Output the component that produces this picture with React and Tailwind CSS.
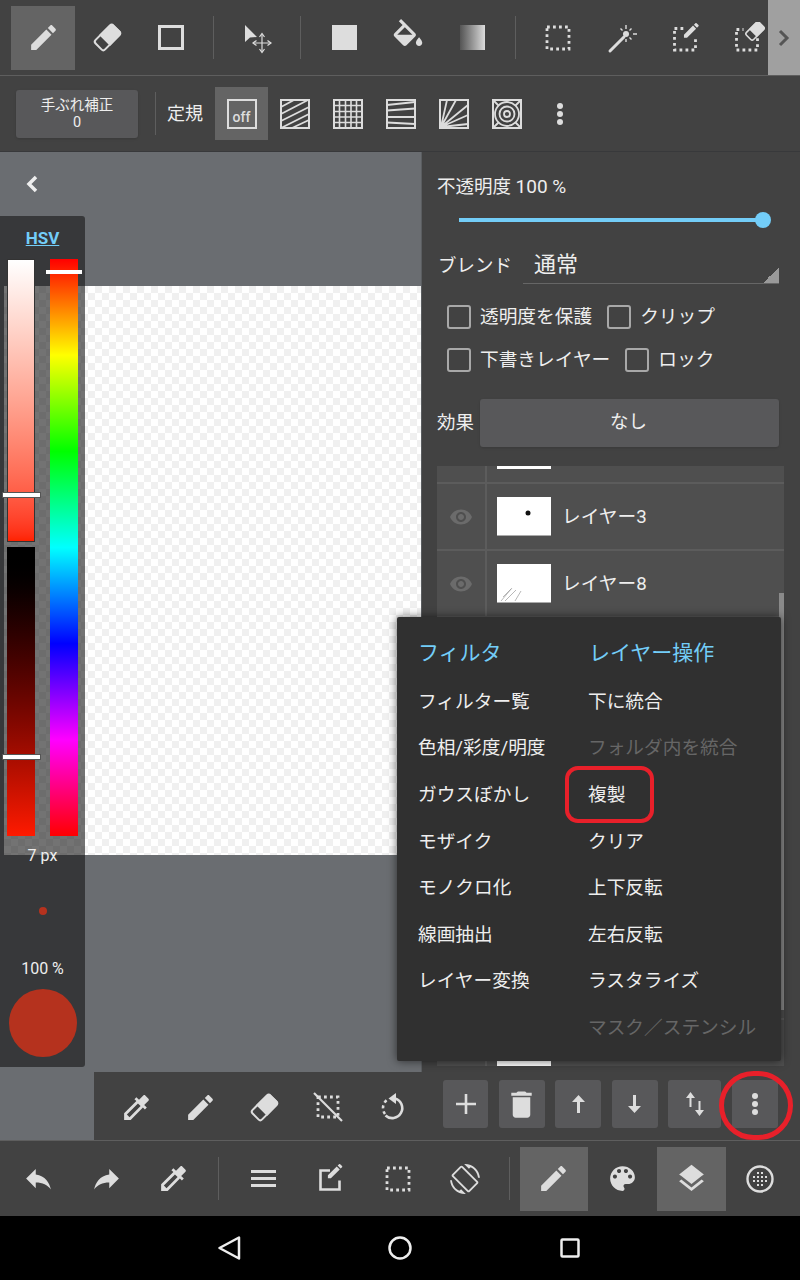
import React from 'react';

const C = '#dddddd';

const PATHS = {
  pencil: 'M3 17.25V21h3.75L17.81 9.94l-3.75-3.75L3 17.25zM20.71 7.04c.39-.39.39-1.02 0-1.41l-2.34-2.34c-.39-.39-1.02-.39-1.41 0l-1.83 1.83 3.75 3.75 1.83-1.83z',
  bucket: 'M16.56 8.94L7.62 0 6.21 1.41l2.38 2.38-5.15 5.15c-.59.59-.59 1.54 0 2.12l5.5 5.5c.29.29.68.44 1.06.44s.77-.15 1.06-.44l5.5-5.5c.59-.58.59-1.53 0-2.12zM5.21 10L10 5.21 14.79 10H5.21zM19 11.5s-2 2.17-2 3.5c0 1.1.9 2 2 2s2-.9 2-2c0-1.33-2-3.5-2-3.5z',
  dropper: 'M20.71 5.63l-2.34-2.34c-.39-.39-1.02-.39-1.41 0l-3.12 3.12-1.93-1.91-1.41 1.41 1.42 1.42L3 16.25V21h4.75l8.92-8.92 1.42 1.42 1.41-1.41-1.92-1.92 3.12-3.12c.4-.4.4-1.03.01-1.42zM6.92 19L5 17.08l8.06-8.06 1.92 1.92L6.92 19z',
  undo: 'M10 9V5l-7 7 7 7v-4.1c5 0 8.5 1.6 11 5.1-1-5-4-10-11-11z',
  redo: 'M14 9V5l7 7-7 7v-4.1c-5 0-8.5 1.6-11 5.1 1-5 4-10 11-11z',
  palette: 'M12 3c-4.97 0-9 4.03-9 9s4.03 9 9 9c.83 0 1.5-.67 1.5-1.5 0-.39-.15-.74-.39-1.01-.23-.26-.38-.61-.38-.99 0-.83.67-1.5 1.5-1.5H16c2.76 0 5-2.24 5-5 0-4.42-4.03-8-9-8zm-5.5 9c-.83 0-1.5-.67-1.5-1.5S5.67 9 6.5 9 8 9.67 8 10.5 7.33 12 6.5 12zm3-4C8.67 8 8 7.33 8 6.5S8.67 5 9.5 5s1.5.67 1.5 1.5S10.33 8 9.5 8zm5 0c-.83 0-1.5-.67-1.5-1.5S13.67 5 14.5 5s1.5.67 1.5 1.5S15.33 8 14.5 8zm3 4c-.83 0-1.5-.67-1.5-1.5S16.67 9 17.5 9s1.5.67 1.5 1.5-.67 1.5-1.5 1.5z',
  layers: 'M11.99 18.54l-7.37-5.73L3 14.07l9 7 9-7-1.63-1.27-7.38 5.74zM12 16l7.36-5.73L21 9l-9-7-9 7 1.63 1.27L12 16z',
  trash: 'M6 19c0 1.1.9 2 2 2h8c1.1 0 2-.9 2-2V7H6v12zM19 4h-3.5l-1-1h-5l-1 1H5v2h14V4z',
  eye: 'M12 4.5C7 4.5 2.73 7.61 1 12c1.73 4.39 6 7.5 11 7.5s9.27-3.11 11-7.5c-1.73-4.39-6-7.5-11-7.5zM12 17c-2.76 0-5-2.24-5-5s2.24-5 5-5 5 2.24 5 5-2.24 5-5 5zm0-8c-1.66 0-3 1.34-3 3s1.34 3 3 3 3-1.34 3-3-1.34-3-3-3z',
  screenRotate: 'M16.48 2.52c3.27 1.55 5.61 4.72 5.97 8.48h1.5C23.44 4.84 18.29 0 12 0l-.66.03 3.81 3.81 1.33-1.32zm-6.25-.77c-.59-.59-1.54-.59-2.12 0L1.75 8.11c-.59.59-.59 1.54 0 2.12l12.02 12.02c.59.59 1.54.59 2.12 0l6.36-6.36c.59-.59.59-1.54 0-2.12L10.23 1.75zm4.6 19.44L2.81 9.17l6.36-6.36 12.02 12.02-6.36 6.36zm-7.31.29C4.25 19.94 1.91 16.76 1.55 13H.05C.56 19.16 5.71 24 12 24l.66-.03-3.81-3.81-1.33 1.32z',
};

function Mi({ name, size = 33, color = C }) {
  return (
    <svg width={size} height={size} viewBox="0 0 24 24" fill={color}>
      <path d={PATHS[name]} />
    </svg>
  );
}

function S({ size = 32, children }) {
  return (
    <svg width={size} height={size} viewBox="0 0 32 32" fill="none" stroke={C}>
      {children}
    </svg>
  );
}

function Eraser() {
  return (
    <svg width="31" height="31" viewBox="0 0 24 24">
      <g transform="rotate(-45 12 12)">
        <rect x="2.2" y="6.8" width="19.6" height="10.4" rx="2" fill="none" stroke={C} strokeWidth="1.6" />
        <path d="M8.8 6h11c1.3 0 2.6 1.2 2.6 2.6v6.8c0 1.4-1.3 2.6-2.6 2.6h-11z" fill={C} />
      </g>
    </svg>
  );
}

function Dotted({ x = 5, y = 5, s = 22 }) {
  return (
    <rect x={x} y={y} width={s} height={s} strokeWidth="2.8" strokeDasharray="2.8 3.2" stroke={C} fill="none" />
  );
}

function MoveTool() {
  return (
    <S>
      <polygon points="3,3 3,20 8,15.5 15,15" fill={C} stroke="none" />
      <g strokeWidth="1.2">
        <path d="M20 12v18M11 21h18" />
        <path d="M17.5 15l2.5-3.5 2.5 3.5M17.5 27l2.5 3.5 2.5-3.5M14.5 18.5L11 21l3.5 2.5M25.5 18.5L29 21l-3.5 2.5" />
      </g>
    </S>
  );
}

function Wand() {
  return (
    <S>
      <path d="M4 29L18 15" strokeWidth="3" strokeLinecap="round" />
      <circle cx="20" cy="12" r="3" fill={C} stroke="none" />
      <path d="M20 3v4M20 17v3M27 12h4M25.5 6.5l-2 2M25.5 17.5l-2-2M14.5 6.5l2 2" strokeWidth="1.4" />
    </S>
  );
}

function SelectPencil() {
  return (
    <svg width="32" height="32" viewBox="0 0 32 32" fill="none">
      <path d="M4.5 6.5h9M4.5 9v19h21v-13" stroke={C} strokeWidth="2.8" strokeDasharray="2.8 3.2" />
      <g transform="translate(11.5 -1.5) scale(0.82)">
        <path d={PATHS.pencil} fill={C} />
      </g>
    </svg>
  );
}

function SelectEraser() {
  return (
    <svg width="32" height="32" viewBox="0 0 32 32" fill="none">
      <path d="M2.5 7.5h7M2.5 10v18h21v-12" stroke={C} strokeWidth="2.8" strokeDasharray="2.8 3.2" />
      <g transform="rotate(-45 21 9)">
        <rect x="12" y="4" width="18" height="10" rx="2" fill="#424242" stroke={C} strokeWidth="1.6" />
        <path d="M18 3.5h10.5c1.2 0 2 1 2 2v7c0 1-.8 2-2 2H18z" fill={C} />
      </g>
    </svg>
  );
}

function NoSelect() {
  return (
    <S>
      <Dotted x={6} y={6} s={20} />
      <path d="M2 2l28 28" strokeWidth="2.2" />
    </S>
  );
}

function RotateDashed() {
  return (
    <S>
      <path d="M19 7.5a10 10 0 1 1-9.5 17" strokeWidth="2.6" />
      <path d="M9 23a10 10 0 0 1 2-14" strokeWidth="2.6" strokeDasharray="3 3" />
      <polygon points="20,2 20,13 12.5,7.5" fill={C} stroke="none" />
    </S>
  );
}

function EditBox() {
  return (
    <svg width="32" height="32" viewBox="0 0 32 32" fill="none">
      <path d="M15 7.5H5.5v19h19v-9" stroke={C} strokeWidth="2.6" />
      <g transform="translate(10.5 -1.5) scale(0.8)">
        <path d={PATHS.pencil} fill={C} />
      </g>
    </svg>
  );
}

function DotCircle() {
  const dots = [];
  [-6, -2, 2, 6].forEach((a) => {
    [-6, -2, 2, 6].forEach((b) => {
      if (Math.abs(a) + Math.abs(b) < 12) dots.push([a, b]);
    });
  });
  return (
    <S>
      <circle cx="16" cy="16" r="12.5" strokeWidth="2.4" />
      {dots.map(([a, b]) => (
        <rect key={a + '_' + b} x={15 + a} y={15 + b} width="2" height="2" fill={C} stroke="none" />
      ))}
    </S>
  );
}

function Ruler({ sw = '1.8', children }) {
  return (
    <svg width="30" height="30" viewBox="0 0 30 30" fill="none" stroke={C} strokeWidth={sw}>
      <rect x="1" y="1" width="28" height="28" strokeWidth="2" />
      {children}
    </svg>
  );
}

function Dots({ r = 3 }) {
  return (
    <svg width="8" height="26" viewBox="0 0 8 26" fill={C}>
      <circle cx="4" cy="5" r={r} />
      <circle cx="4" cy="13" r={r} />
      <circle cx="4" cy="21" r={r} />
    </svg>
  );
}

function Cell({ active, children }) {
  return (
    <div className={'w-16 h-16 shrink-0 flex items-center justify-center ' + (active ? 'bg-[#646464]' : '')}>
      {children}
    </div>
  );
}

function TopBar() {
  return (
    <div className="h-[75px] shrink-0 flex items-center pl-[11px] relative overflow-hidden bg-[#424242]">
      <Cell active><Mi name="pencil" /></Cell>
      <Cell><Eraser /></Cell>
      <Cell>
        <div className="w-[26px] h-[25px] border-[3px] border-[#dddddd]" />
      </Cell>
      <div className="w-px h-[43px] bg-[#5e5e5e] shrink-0 ml-[10px] mr-[12px]" />
      <Cell><MoveTool /></Cell>
      <div className="w-px h-[43px] bg-[#5e5e5e] shrink-0 ml-[10px] mr-[11px]" />
      <Cell>
        <div className="w-[25px] h-[25px] bg-[#dddddd]" />
      </Cell>
      <Cell><Mi name="bucket" size={38} /></Cell>
      <Cell>
        <div className="w-[25px] h-[25px] bg-gradient-to-r from-[#555555] to-[#dddddd]" />
      </Cell>
      <div className="w-px h-[43px] bg-[#5e5e5e] shrink-0 ml-[11px] mr-[10px]" />
      <Cell><S><Dotted /></S></Cell>
      <Cell><Wand /></Cell>
      <Cell><SelectPencil /></Cell>
      <Cell><SelectEraser /></Cell>
      <div className="absolute right-0 top-0 w-8 h-[75px] bg-[#a0a0a0] flex items-center justify-center">
        <svg width="14" height="20" viewBox="0 0 14 20" fill="none" stroke="#555555" strokeWidth="3">
          <path d="M3 3l7 7-7 7" />
        </svg>
      </div>
    </div>
  );
}

function RulerCell({ active, children }) {
  return (
    <div className={'w-[53px] h-[53px] shrink-0 flex items-center justify-center ' + (active ? 'bg-[#646464]' : '')}>
      {children}
    </div>
  );
}

function RulerBar() {
  return (
    <div className="h-[76px] shrink-0 border-t border-[#5e5e5e] flex items-center pl-4 bg-[#424242]">
      <div className="w-[122px] h-12 rounded-[3px] bg-[#58585a] flex flex-col items-center justify-center text-[#eeeeee] text-[14.5px] leading-[17px] shadow-sm">
        <span>手ぶれ補正</span>
        <span>0</span>
      </div>
      <div className="w-px h-[43px] bg-[#5e5e5e] ml-[17px] mr-[11px]" />
      <span className="text-[18px] text-[#eeeeee] w-[48px]">定規</span>
      <RulerCell active>
        <div className="w-[30px] h-[30px] border-2 border-[#dddddd] flex items-end justify-center">
          <span className="text-[14px] leading-[20px] font-medium text-[#dddddd]">off</span>
        </div>
      </RulerCell>
      <RulerCell>
        <Ruler>
          <path d="M1 8L14 1M1 15L28 1M1 22L29 8M1 29L29 15M12 29L29 21" />
        </Ruler>
      </RulerCell>
      <RulerCell>
        <Ruler sw="1.6">
          <path d="M6.5 1v28M12.5 1v28M18 1v28M23.5 1v28M1 6.5h28M1 12.5h28M1 18h28M1 23.5h28" />
        </Ruler>
      </RulerCell>
      <RulerCell>
        <Ruler>
          <path d="M1 6L29 3M1 11.5L29 9.5M1 18L29 18M1 23.5L29 25" />
        </Ruler>
      </RulerCell>
      <RulerCell>
        <Ruler>
          <path d="M2 28L8 1M2 28L17 1M2 28L29 6M2 28L29 16M2 28L29 25" />
        </Ruler>
      </RulerCell>
      <RulerCell>
        <Ruler>
          <path d="M1 1l6 6M29 1l-6 6M1 29l6-6M29 29l-6-6" />
          <circle cx="15" cy="15" r="12" fill="#424242" />
          <circle cx="15" cy="15" r="7.5" />
          <circle cx="15" cy="15" r="3" />
        </Ruler>
      </RulerCell>
      <RulerCell><Dots /></RulerCell>
    </div>
  );
}

function ColorPanel() {
  return (
    <div className="absolute left-0 top-[64px] w-[85px] h-[851px] rounded-r-[3px] bg-[#161616]/60 flex flex-col text-[#eeeeee]">
      <div className="h-[43px] pt-[11px] text-center text-[17px] leading-[22px] font-bold text-[#73cdf8] underline">HSV</div>
      <div className="flex gap-[15px] pl-[7px] relative">
        <div className="w-7 flex flex-col gap-[5px]">
          <div className="h-[283px] border border-[#333333] bg-gradient-to-b from-white to-[#ff2200]" />
          <div className="h-[289px] bg-gradient-to-b from-black to-[#ff1a00]" />
        </div>
        <div className="w-7 h-[577px] bg-[linear-gradient(to_bottom,#ff0000,#ffff00,#00ff00,#00ffff,#0000ff,#ff00ff,#ff0000)]" />
        <div className="absolute left-[46px] top-[11px] w-[36px] h-[4px] bg-white" />
        <div className="absolute left-[3px] top-[234px] w-[37px] h-[4px] bg-white outline outline-[#555555]" />
        <div className="absolute left-[3px] top-[496px] w-[37px] h-[4px] bg-white outline outline-[#555555]" />
      </div>
      <div className="mt-[10px] text-center text-[16px] leading-5">7 px</div>
      <div className="mt-[41px] mx-auto w-2 h-2 rounded-full bg-[#b5321e]" />
      <div className="mt-[44px] text-center text-[16px] leading-5">100 %</div>
      <div className="mt-[10px] mx-auto w-[68px] h-[68px] rounded-full bg-[#b5321e]" />
    </div>
  );
}

function Check({ label, className = '' }) {
  return (
    <div className={'h-6 flex items-center ' + className}>
      <div className="w-6 h-6 rounded-[3px] border-2 border-[#a8a8a8] shrink-0" />
      <span className="ml-[9px] text-[18.7px] leading-[26px] text-[#eeeeee] whitespace-nowrap">{label}</span>
    </div>
  );
}

function LayerRow({ name, mark }) {
  return (
    <div className="h-[67px] shrink-0 border-b-2 border-[#5c5c5c] flex">
      <div className="w-12 flex items-center justify-center">
        <Mi name="eye" size={24} color="#6b6b6b" />
      </div>
      <div className="w-[2px] bg-[#5c5c5c]" />
      <div className="ml-[10px] mt-[13px] w-[54px] h-[39px] bg-white border-b border-[#aaaaaa] shrink-0">{mark}</div>
      <span className="ml-[11px] mt-[2px] self-center text-[18.7px] text-[#eeeeee]">{name}</span>
    </div>
  );
}

function LayerList() {
  return (
    <div className="mt-[19px] mr-4 h-[600px] bg-[#4f4f4f] overflow-hidden relative flex flex-col">
      <div className="h-[18px] shrink-0 border-b-2 border-[#5c5c5c] flex">
        <div className="w-12" />
        <div className="w-[2px] bg-[#5c5c5c]" />
        <div className="ml-[10px] w-[54px] h-[3px] bg-white" />
      </div>
      <LayerRow
        name="レイヤー3"
        mark={
          <svg width="54" height="38" viewBox="0 0 54 38">
            <circle cx="31" cy="16" r="2.5" fill="#111111" />
          </svg>
        }
      />
      <LayerRow
        name="レイヤー8"
        mark={
          <svg width="54" height="38" viewBox="0 0 54 38" stroke="#999999" strokeWidth="0.7">
            <path d="M4 37L15 24M8 37L19 26M18 37L24 27M6 33L14 25" />
          </svg>
        }
      />
      {['', '', '', '', '', '', '', ''].map((n, i) => (
        <LayerRow key={i} name={n} />
      ))}
      <div className="absolute right-0 top-[127px] w-[5px] h-[417px] bg-[#8a8a8a]" />
    </div>
  );
}

function RightPanel() {
  return (
    <div className="flex-1 bg-[#424242] border-l border-[#5a5d60] pl-[15px] flex flex-col text-[#eeeeee]">
      <div className="mt-[23px] h-6 text-[18.5px] leading-6 whitespace-nowrap">
        不透明度 <span className="text-[19px]">100 %</span>
      </div>
      <div className="mt-[13px] ml-[22px] h-4 flex items-center">
        <div className="w-[300px] h-[4px] bg-[#73cdf8]" />
        <div className="w-4 h-4 rounded-full bg-[#73cdf8] -ml-1" />
      </div>
      <div className="mt-[20px] h-9 flex">
        <span className="w-[86px] text-[18.5px] leading-[36px] pl-px">ブレンド</span>
        <div className="relative w-[256px] border-b border-[#666666] pl-[11px] text-[22px] leading-[34px]">
          通常
          <div className="absolute right-0 bottom-0 w-4 h-4 bg-[linear-gradient(to_bottom_right,transparent_50%,#999999_50%)]" />
        </div>
      </div>
      <div className="mt-[21px] ml-[10px] flex">
        <Check label="透明度を保護" />
        <Check label="クリップ" className="ml-[15px]" />
      </div>
      <div className="mt-[19px] ml-[10px] flex">
        <Check label="下書きレイヤー" />
        <Check label="ロック" className="ml-[15px]" />
      </div>
      <div className="mt-[27px] h-12 flex items-center">
        <span className="w-[43px] text-[18.5px] leading-[26px]">効果</span>
        <div className="w-[299px] h-12 rounded-[3px] bg-[#58585a] flex items-center justify-center pr-[2px] text-[18.5px] shadow-sm">なし</div>
      </div>
      <LayerList />
    </div>
  );
}

function MenuItem({ disabled, children }) {
  return (
    <div className={'h-[46.6px] flex items-center text-[18.7px] whitespace-nowrap ' + (disabled ? 'text-[#666666]' : 'text-[#eeeeee]')}>
      {children}
    </div>
  );
}

function PopMenu() {
  return (
    <div className="absolute left-[397px] top-[465px] w-[384px] h-[444px] bg-[#303030] rounded-[2px] shadow-[0_0_10px_rgba(0,0,0,0.6)] flex pl-[21px] pt-[13px]">
      <div className="w-[170px]">
        <div className="h-[47px] text-[21px] leading-[47px] text-[#73cdf8] mb-[1.5px]">フィルタ</div>
        <MenuItem>フィルター覧</MenuItem>
        <MenuItem>色相/彩度/明度</MenuItem>
        <MenuItem>ガウスぼかし</MenuItem>
        <MenuItem>モザイク</MenuItem>
        <MenuItem>モノクロ化</MenuItem>
        <MenuItem>線画抽出</MenuItem>
        <MenuItem>レイヤー変換</MenuItem>
      </div>
      <div className="flex-1">
        <div className="h-[47px] pl-px text-[21px] leading-[47px] text-[#73cdf8] mb-[1.5px]">レイヤー操作</div>
        <MenuItem>下に統合</MenuItem>
        <MenuItem disabled>フォルダ内を統合</MenuItem>
        <MenuItem>複製</MenuItem>
        <MenuItem>クリア</MenuItem>
        <MenuItem>上下反転</MenuItem>
        <MenuItem>左右反転</MenuItem>
        <MenuItem>ラスタライズ</MenuItem>
        <MenuItem disabled>マスク／ステンシル</MenuItem>
      </div>
      <div className="absolute left-[168px] top-[149px] w-[89px] h-[57px] rounded-[13px] border-[4px] border-[#e8202a]" />
    </div>
  );
}

function BarBtn({ w = 'w-[46px]', children }) {
  return (
    <div className={'h-12 rounded-[3px] bg-[#58585a] flex items-center justify-center shrink-0 ' + w}>{children}</div>
  );
}

function LayerBar() {
  return (
    <div className="absolute left-[93px] right-0 bottom-0 h-[68px] bg-[#424242] border-l border-[#6a6d71] flex items-center">
      <div className="w-16 ml-[10px] mt-[2px] flex justify-center shrink-0"><Mi name="dropper" /></div>
      <div className="w-16 mt-[2px] flex justify-center shrink-0"><Mi name="pencil" /></div>
      <div className="w-16 mt-[2px] flex justify-center shrink-0"><Eraser /></div>
      <div className="w-16 mt-[2px] flex justify-center shrink-0"><NoSelect /></div>
      <div className="w-16 mt-[2px] flex justify-center shrink-0"><RotateDashed /></div>
      <div className="ml-[19px] mb-[4px] flex gap-[10.5px]">
        <BarBtn w="w-[45px]">
          <svg width="20" height="20" viewBox="0 0 20 20" stroke={C} strokeWidth="2.6"><path d="M10 0v20M0 10h20" /></svg>
        </BarBtn>
        <BarBtn><Mi name="trash" size={35} /></BarBtn>
        <BarBtn>
          <svg width="13" height="18" viewBox="0 0 13 18" fill={C}><path d="M6.5 0L13 7H8v11H5V7H0z" /></svg>
        </BarBtn>
        <BarBtn>
          <svg width="13" height="18" viewBox="0 0 13 18" fill={C}><path d="M6.5 18L0 11h5V0h3v11h5z" /></svg>
        </BarBtn>
        <BarBtn w="w-[53px]">
          <svg width="18" height="24" viewBox="0 0 18 24" fill={C}>
            <path d="M4.5 0L9 6H5.5v9h-2V6H0zM13.5 24L9 18h3.5V9h2v9H18z" />
          </svg>
        </BarBtn>
        <BarBtn><Dots /></BarBtn>
      </div>
      <div className="absolute right-[7px] top-[-1px] w-[74px] h-[69px] rounded-full border-[5px] border-[#e8202a]" />
    </div>
  );
}

function BottomCell({ active, w = 'w-[67.5px]', children }) {
  return (
    <div className={'h-16 shrink-0 flex items-center justify-center ' + w + (active ? ' bg-[#646464]' : '')}>
      {children}
    </div>
  );
}

function BottomBar() {
  return (
    <div className="h-[76px] shrink-0 border-t border-[#5e5e5e] bg-[#424242] flex items-center pl-[5px]">
      <BottomCell><Mi name="undo" /></BottomCell>
      <BottomCell><Mi name="redo" /></BottomCell>
      <BottomCell><Mi name="dropper" /></BottomCell>
      <div className="w-px h-[43px] bg-[#5e5e5e] shrink-0 ml-[10px] mr-[11px]" />
      <BottomCell>
        <div className="w-[25px] flex flex-col gap-[4px]">
          <div className="h-[3px] bg-[#dddddd]" />
          <div className="h-[3px] bg-[#dddddd]" />
          <div className="h-[3px] bg-[#dddddd]" />
        </div>
      </BottomCell>
      <BottomCell><EditBox /></BottomCell>
      <BottomCell><S><Dotted /></S></BottomCell>
      <BottomCell w="w-[66.5px]"><Mi name="screenRotate" size={30} /></BottomCell>
      <div className="w-px h-[43px] bg-[#5e5e5e] shrink-0 ml-[10px] mr-[10px]" />
      <BottomCell active w="w-[68.7px]"><Mi name="pencil" /></BottomCell>
      <BottomCell w="w-[68.7px]"><Mi name="palette" /></BottomCell>
      <BottomCell active w="w-[68.7px]"><Mi name="layers" /></BottomCell>
      <BottomCell w="w-[68.7px]"><DotCircle /></BottomCell>
    </div>
  );
}

function NavBar() {
  return (
    <div className="h-16 shrink-0 bg-black flex items-center justify-center gap-[146px]">
      <svg width="24" height="24" viewBox="0 0 24 24" fill="none" stroke="#eeeeee" strokeWidth="2.5" strokeLinejoin="round">
        <path d="M21 1.5v21L1.5 12z" />
      </svg>
      <svg width="24" height="24" viewBox="0 0 24 24" fill="none" stroke="#eeeeee" strokeWidth="2.5">
        <circle cx="12" cy="12" r="10.5" />
      </svg>
      <svg width="24" height="24" viewBox="0 0 24 24" fill="none" stroke="#eeeeee" strokeWidth="2.5">
        <rect x="3.5" y="3.5" width="17" height="17" rx="1" />
      </svg>
    </div>
  );
}

export default function App() {
  return (
    <div className="w-[800px] h-[1280px] flex flex-col overflow-hidden bg-[#424242] font-['Roboto','Noto_Sans_CJK_JP',sans-serif]">
      <TopBar />
      <RulerBar />
      <div className="h-[989px] shrink-0 flex relative border-t border-[#38393b]">
        {/* canvas */}
        <div className="w-[421px] shrink-0 bg-[#6a6d71] relative">
          <svg className="absolute left-[24px] top-[22px]" width="16" height="20" viewBox="0 0 16 20" fill="none" stroke="#eeeeee" strokeWidth="3.5">
            <path d="M12 3L5 10l7 7" />
          </svg>
          <div className="absolute left-[4px] top-[134px] w-[417px] h-[569px] bg-white bg-[repeating-conic-gradient(#f0f0f0_0_25%,#ffffff_0_50%)] bg-[length:14px_14px]" />
          <ColorPanel />
        </div>
        <RightPanel />
        <LayerBar />
        <PopMenu />
      </div>
      <BottomBar />
      <NavBar />
    </div>
  );
}
